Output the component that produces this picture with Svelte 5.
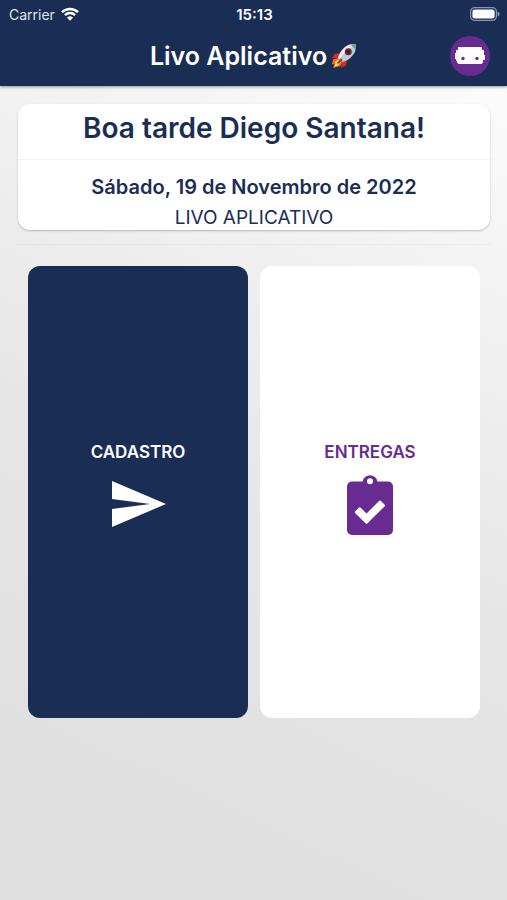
<script lang="ts">
  const carrier = "Carrier";
  const time = "15:13";
  const company = "LIVO APLICATIVO";
  const user = "Diego Santana";
  const today = "Sábado, 19 de Novembro de 2022";
</script>

<div class="app">
  <header class="topbar">
    <div class="status">
      <div class="carrier">
        <span>{carrier}</span>
        <svg class="wifi" viewBox="0 0 18 14" aria-hidden="true">
          <path d="M1 5.2a11.5 11.5 0 0 1 16 0" />
          <path d="M3.9 8.1a7.4 7.4 0 0 1 10.2 0" />
          <path class="dot" d="M9 13.8 6 10.8a4.3 4.3 0 0 1 6 0z" />
        </svg>
      </div>
      <span class="time">{time}</span>
      <svg class="battery" viewBox="0 0 30 14" aria-hidden="true">
        <rect class="shell" x="0.6" y="0.6" width="25.8" height="12.8" rx="4" />
        <rect x="2.4" y="2.4" width="22.2" height="9.2" rx="2.4" fill="#fff" />
        <path d="M27.6 4.6v4.8c1.2-.4 2-1.300 2-2.400s-.8-2-2-2.400z" fill="#8996ad" />
      </svg>
    </div>

    <div class="nav">
      <h1>
        <span>Livo Aplicativo</span>
        <svg class="rocket" viewBox="0 0 26 26" aria-hidden="true">
          <path d="M9 10 3.500 11 1 15.500l6-.5zM16 17l-1 5.500-5 2.500 1-7z" fill="#d92b1f" />
          <path d="M2 16.500 7 15l4 4-1.500 4L2 25l1.500-3.500L1 21z" fill="#ef6a22" />
          <path d="M4 18.500 7.500 16.500l2.500 2.500L7 22.500l-4 1.500 1.500-3.500z" fill="#ffd552" />
          <path d="M7 15c1-5 5-11 11-13.300L25 1l-.7 7C22 14 16 18 11 19z" fill="#b9cbd8" />
          <path d="M7 15C9 9 13 4 19 1.500L25 1C18 5 12 10 8.500 16.500z" fill="#e9f1f6" />
          <path d="M25 1c-2 0-4 .2-5.500.6l4.900 4.900C24.800 5 25 3 25 1z" fill="#8396a6" />
          <circle cx="17.300" cy="8.700" r="3.500" fill="#8b1c20" />
          <circle cx="17.300" cy="8.700" r="2" fill="#252a3a" />
          <path d="M10 15.500 6 20l1 1 4.500-4z" fill="#a51e1c" />
        </svg>
      </h1>
      <button type="button" class="avatar" aria-label="Assistente">
        <svg viewBox="0 0 40 40" aria-hidden="true">
          <path d="M8 11h24v3h2v5h1v5h-2v3h-1v1H8v-1H7v-2H6v-2H5v-6h1v-3h2z" fill="#fff" />
          <circle cx="13" cy="22.500" r="1.700" fill="#642c8f" />
          <circle cx="27" cy="22.500" r="1.700" fill="#642c8f" />
        </svg>
      </button>
    </div>
  </header>

  <main>
    <section class="welcome">
      <h2>Boa tarde {user}!</h2>
      <div class="details">
        <p class="date">{today}</p>
        <p class="company">{company}</p>
      </div>
    </section>

    <hr />

    <nav class="tiles" aria-label="Menu principal">
      <button type="button" class="tile primary">
        <span>CADASTRO</span>
        <svg viewBox="0 0 64 64" aria-hidden="true">
          <path d="M6 9 60 32 6 55V37L44 32 6 27z" fill="currentColor" />
        </svg>
      </button>
      <button type="button" class="tile">
        <span>ENTREGAS</span>
        <svg viewBox="0 0 64 64" aria-hidden="true">
          <path
            fill="currentColor"
            fill-rule="evenodd"
            d="M14 9.500h10.500a7.600 7.600 0 0 1 15 0H50a5 5 0 0 1 5 5V58a5 5 0 0 1-5 5H14a5 5 0 0 1-5-5V14.500a5 5 0 0 1 5-5zM32 6.300a3 3 0 1 0 0 6 3 3 0 0 0 0-6z"
          />
          <path
            fill="#fff"
            d="m17.300 39.200 3.400-3.400q1-1 2 0L28.500 41.500 41 29q1-1 2 0l3.500 3.500q1 1 0 2L29.500 51.200q-1 1-2 0L17.300 41.200q-1-1 0-2z"
          />
        </svg>
      </button>
    </nav>
  </main>
</div>

<style>
  :global(body) {
    margin: 0;
  }

  .app {
    --navy: #1a2e55;
    --purple: #672b91;
    min-height: 100vh;
    display: flex;
    flex-direction: column;
    background: linear-gradient(205deg, #ffffff 0%, #f3f3f3 25%, #e6e6e6 55%, #e0e0e0 85%);
    font-family: Inter, "Liberation Sans", sans-serif;
    color: var(--navy);
  }

  h1,
  h2,
  p {
    margin: 0;
  }

  button {
    border: 0;
    font: inherit;
    cursor: pointer;
  }

  .topbar {
    background: var(--navy);
    color: #fff;
    box-shadow: 0 1px 3px rgba(0, 0, 0, 0.4);
  }

  .status {
    display: grid;
    grid-template-columns: 1fr auto 1fr;
    align-items: center;
    height: 28px;
    padding: 0 7px 0 9px;
    font-size: 14px;
  }

  .carrier {
    display: flex;
    align-items: center;
    gap: 6px;
    color: #dfe4ec;
  }

  .wifi {
    width: 18px;
    height: 14px;
    fill: none;
    stroke: #fff;
    stroke-width: 2.4;
  }

  .wifi .dot {
    fill: #fff;
    stroke: none;
  }

  .time {
    font-size: 15px;
    font-weight: 600;
  }

  .battery {
    justify-self: end;
    width: 30px;
    height: 14px;
  }

  .shell {
    fill: none;
    stroke: #8996ad;
    stroke-width: 1.2;
  }

  .nav {
    display: grid;
    grid-template-columns: 40px 1fr 40px;
    align-items: center;
    height: 58px;
    padding: 0 17px;
  }

  .nav > * {
    margin-bottom: 2px;
  }

  h1 {
    grid-column: 2;
    display: flex;
    justify-content: center;
    align-items: center;
    gap: 4px;
    font-size: 25px;
    line-height: 32px;
    font-weight: 600;
    white-space: nowrap;
  }

  .rocket {
    width: 26px;
    height: 26px;
  }

  .avatar {
    width: 40px;
    height: 40px;
    padding: 0;
    border-radius: 50%;
    background: var(--purple);
  }

  .avatar svg {
    display: block;
  }

  main {
    padding: 18px 15px 18px 16px;
  }

  .welcome {
    margin: 0 2px;
    border-radius: 12px;
    background: #fff;
    box-shadow: 0 1px 2px rgba(0, 0, 0, 0.24);
    text-align: center;
  }

  h2 {
    padding: 4px 0 11px;
    border-bottom: 1px solid #f3f3f3;
    font-size: 28px;
    line-height: 40px;
    font-weight: 600;
  }

  .details {
    padding-top: 12px;
  }

  .date {
    font-size: 20px;
    line-height: 30px;
    font-weight: 600;
  }

  .company {
    padding-top: 4px;
    font-size: 19px;
    line-height: 24px;
  }

  hr {
    height: 1px;
    margin: 14px 0 21px;
    border: 0;
    background: rgba(0, 0, 0, 0.03);
  }

  .tiles {
    display: grid;
    grid-template-columns: 1fr 1fr;
    gap: 12px;
    min-height: calc(50vh + 2px);
    padding: 0 12px;
  }

  .tile {
    display: flex;
    flex-direction: column;
    justify-content: center;
    align-items: center;
    gap: 8px;
    padding: 0 0 8px;
    border-radius: 12px;
    background: #fff;
    color: var(--purple);
    font-size: 17px;
    line-height: 24px;
    font-weight: 600;
  }

  .tile svg {
    width: 64px;
    height: 64px;
  }

  .primary {
    background: var(--navy);
    color: #fff;
  }
</style>
